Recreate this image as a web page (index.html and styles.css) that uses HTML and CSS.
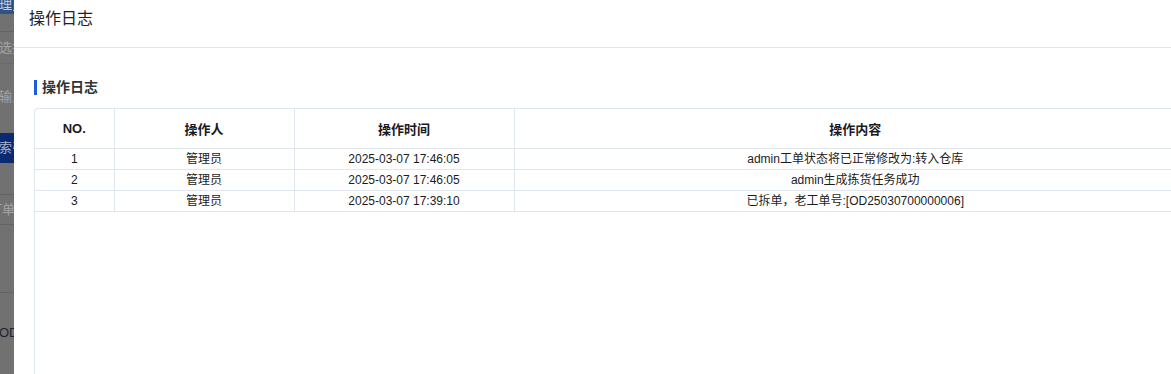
FILE: index.html
```html
<!DOCTYPE html>
<html lang="zh-CN">
<head>
<meta charset="utf-8">
<title>操作日志</title>
<link rel="stylesheet" href="styles.css">
</head>
<body>
<div class="page">
  <aside class="backdrop">
    <div class="bg-head"><span class="bg-text">理员</span></div>
    <div class="bg-row r-a"></div>
    <div class="bg-row r-b"><span class="bg-text muted">选择</span></div>
    <div class="bg-row r-c"><span class="bg-text muted">输入</span></div>
    <div class="bg-btn"><span class="bg-text">索引</span></div>
    <div class="bg-row r-d"></div>
    <div class="bg-row r-e"><span class="bg-text muted shift-dan">订单</span></div>
    <div class="bg-row r-f"></div>
    <div class="bg-row r-g"><span class="bg-text dark">OD2</span></div>
  </aside>
  <section class="modal">
    <header class="modal-header">操作日志</header>
    <div class="modal-body">
      <h3 class="section-title">操作日志</h3>
      <div class="table-wrap">
        <table class="log-table">
          <colgroup>
            <col class="c-no"><col class="c-user"><col class="c-time"><col class="c-content">
          </colgroup>
          <thead>
            <tr><th>NO.</th><th>操作人</th><th>操作时间</th><th>操作内容</th></tr>
          </thead>
          <tbody>
            <tr><td>1</td><td>管理员</td><td>2025-03-07 17:46:05</td><td>admin工单状态将已正常修改为:转入仓库</td></tr>
            <tr><td>2</td><td>管理员</td><td>2025-03-07 17:46:05</td><td>admin生成拣货任务成功</td></tr>
            <tr><td>3</td><td>管理员</td><td>2025-03-07 17:39:10</td><td>已拆单，老工单号:[OD25030700000006]</td></tr>
          </tbody>
        </table>
      </div>
    </div>
  </section>
</div>
</body>
</html>
```

FILE: styles.css
```css
* { box-sizing: border-box; }
html, body {
  margin: 0;
  padding: 0;
  width: 1171px;
  height: 374px;
  overflow: hidden;
  background: #ffffff;
  font-family: "Liberation Sans", Arial, "Noto Sans CJK SC", sans-serif;
}
.page {
  display: flex;
  height: 374px;
  width: 1171px;
  overflow: hidden;
}
.backdrop {
  flex: 0 0 14px;
  width: 14px;
  height: 374px;
  overflow: hidden;
  background: #717171;
  display: flex;
  flex-direction: column;
  font-size: 13px;
}
.bg-head, .bg-row, .bg-btn {
  flex: 0 0 auto;
  white-space: nowrap;
}
.bg-text { display: inline-block; margin-left: -1px; }
.bg-head {
  height: 14px;
  background: #2f5383;
  color: #c3cee0;
  line-height: 10px;
}
.bg-row { border-top: 1px solid #636363; }
.r-a { height: 17px; border-top: none; }
.r-b { height: 32px; line-height: 31px; }
.r-c { height: 70px; line-height: 66px; border-top-color: #6a6a6a; }
.bg-btn {
  height: 30px;
  background: #0b2a72;
  color: #a6b3cf;
  line-height: 30px;
}
.r-d { height: 31px; border-top: none; }
.r-e { height: 30px; line-height: 29px; }
.r-f { height: 68px; }
.r-g { height: 82px; line-height: 80px; }
.muted { color: #a4a4a4; }
.shift-dan { margin-left: -11px; }
.dark { color: #1e2230; }

.modal {
  flex: 0 0 1200px;
  width: 1200px;
  background: #ffffff;
  display: flex;
  flex-direction: column;
}
.modal-header {
  height: 48px;
  padding: 9px 15px 0;
  font-size: 16px;
  line-height: 20px;
  color: #222222;
  border-bottom: 1px solid #e2e6ec;
}
.modal-body {
  padding: 32px 0 0 20px;
  flex: 1;
  display: flex;
  flex-direction: column;
}
.section-title {
  margin: 0;
  height: 15px;
  line-height: 15px;
  font-size: 14px;
  font-weight: bold;
  color: #333333;
  padding-left: 5px;
  border-left: 3px solid #1a5fd6;
  margin-bottom: 13px;
}
.table-wrap {
  flex: 1;
  border-left: 1px solid #dfe6ee;
  border-top: 1px solid #dfe6ee;
  border-top-left-radius: 4px;
  width: 1162px;
}
.log-table {
  border-collapse: collapse;
  table-layout: fixed;
  width: 100%;
  color: #1c1c1c;
}
.c-no { width: 79px; }
.c-user { width: 180px; }
.c-time { width: 220px; }
.log-table th {
  height: 39px;
  font-size: 13px;
  font-weight: bold;
  color: #1a1a24;
  text-align: center;
  border-right: 1px solid #dfe6ee;
  border-bottom: 1px solid #dfe6ee;
  padding: 0;
}
.log-table td {
  height: 21px;
  font-size: 12px;
  text-align: center;
  border-right: 1px solid #dfe6ee;
  border-bottom: 1px solid #dfe6ee;
  padding: 0;
  line-height: 20px;
}
.log-table th:last-child, .log-table td:last-child { border-right: none; }
```
